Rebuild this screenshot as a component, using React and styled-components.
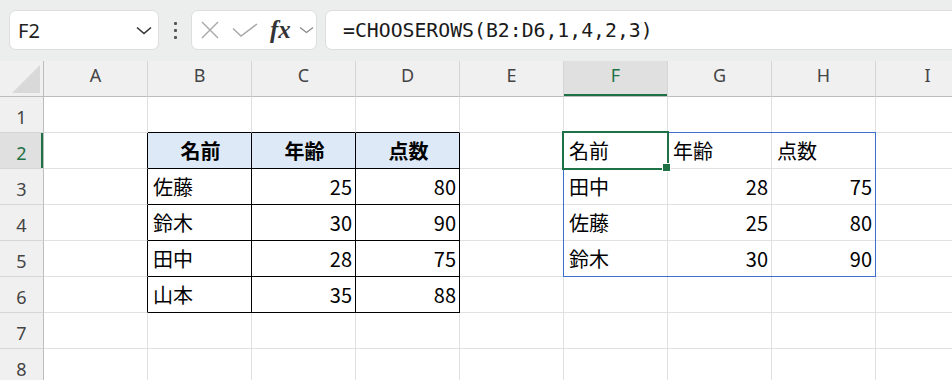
import React from 'react';
import styled, { createGlobalStyle } from 'styled-components';

const COLS = ['A', 'B', 'C', 'D', 'E', 'F', 'G', 'H', 'I'];
const ROWS = [1, 2, 3, 4, 5, 6, 7, 8];

// B2:D6
const source = [
    ['名前', '年齢', '点数'],
    ['佐藤', 25, 80],
    ['鈴木', 30, 90],
    ['田中', 28, 75],
    ['山本', 35, 88],
];

// =CHOOSEROWS(B2:D6,1,4,2,3) spilled from F2
const picked = [1, 4, 2, 3];
const spill = picked.map(i => source[i - 1]);

function cellAt(row, col) {
    if (row >= 2 && row <= 6 && col >= 1 && col <= 3) {
        return { value: source[row - 2][col - 1], head: row === 2 };
    }
    if (row >= 2 && row <= 5 && col >= 5 && col <= 7) {
        return { value: spill[row - 2][col - 5], head: false };
    }
    return null;
}

const inTable = (row, col) => row >= 2 && row <= 6 && col >= 1 && col <= 3;

function App() {
    return (
        <Page>
            <GlobalStyle />
            <Toolbar>
                <NameBox>
                    <NameText>F2</NameText>
                    <svg width="16" height="9" viewBox="0 0 16 9">
                        <path d="M1 1.5 L8 7.5 L15 1.5" fill="none" stroke="#333" strokeWidth="1.6" />
                    </svg>
                </NameBox>
                <Grip>
                    <Dot /><Dot /><Dot />
                </Grip>
                <FxBox>
                    <svg width="20" height="20" viewBox="0 0 20 20">
                        <path d="M2 2 L18 18 M18 2 L2 18" stroke="#a8a8a8" strokeWidth="1.4" />
                    </svg>
                    <svg width="26" height="14" viewBox="0 0 26 14">
                        <path d="M1 5.5 L9 13 L25 1" fill="none" stroke="#a8a8a8" strokeWidth="1.4" />
                    </svg>
                    <FxGlyph>fx</FxGlyph>
                    <svg width="15" height="8" viewBox="0 0 15 8">
                        <path d="M1 1.5 L7.5 6.5 L14 1.5" fill="none" stroke="#8a8a8a" strokeWidth="1.3" />
                    </svg>
                </FxBox>
                <FormulaBox>=CHOOSEROWS(B2:D6,1,4,2,3)</FormulaBox>
            </Toolbar>

            <Sheet>
                <Corner>
                    <svg width="28" height="28" viewBox="0 0 28 28">
                        <path d="M28 0 L28 28 L0 28 Z" fill="#d9d9d9" />
                    </svg>
                </Corner>
                {COLS.map(c => (
                    <ColHead key={c} $active={c === 'F'}>{c}</ColHead>
                ))}
                {ROWS.map(r => (
                    <React.Fragment key={r}>
                        <RowHead $active={r === 2}>{r}</RowHead>
                        {COLS.map((c, ci) => {
                            const cell = cellAt(r, ci);
                            const isNum = cell && typeof cell.value === 'number';
                            const tableHead = cell && cell.head && inTable(r, ci);
                            return (
                                <Cell
                                    key={c}
                                    $edgeRight={r >= 2 && r <= 6 && ci <= 3}
                                    $edgeBottom={r >= 1 && r <= 6 && ci >= 1 && ci <= 3}
                                    $fill={tableHead}
                                    $bold={tableHead}
                                    $align={tableHead ? 'center' : isNum ? 'right' : 'left'}
                                >
                                    {cell ? cell.value : ''}
                                </Cell>
                            );
                        })}
                    </React.Fragment>
                ))}
                <SpillFrame />
                <ActiveCell />
                <FillHandle />
            </Sheet>
        </Page>
    );
}

const GlobalStyle = createGlobalStyle`
    html, body {
        margin: 0;
        background: #fff;
        overflow: hidden;
    }
`;

const Page = styled.div`
    width: 952px;
    height: 380px;
    overflow: hidden;
    font-family: "Noto Sans", "Noto Sans CJK JP", sans-serif;
`;

const Toolbar = styled.div`
    height: 61px;
    box-sizing: border-box;
    padding: 10px 0 11px 9px;
    background: #eceeee;
    display: flex;
    align-items: stretch;
`;

const BoxBase = styled.div`
    background: #fff;
    border: 1px solid #dedede;
    border-radius: 7px;
    box-sizing: border-box;
    display: flex;
    align-items: center;
`;

const NameBox = styled(BoxBase)`
    width: 150px;
    padding: 0 6px 0 8px;
    justify-content: space-between;
`;

const NameText = styled.span`
    font-size: 20px;
    color: #222;
`;

const Grip = styled.div`
    width: 32px;
    display: flex;
    flex-direction: column;
    align-items: center;
    justify-content: center;
    gap: 4px;
`;

const Dot = styled.span`
    width: 3px;
    height: 3px;
    background: #555;
    border-radius: 1px;
`;

const FxBox = styled(BoxBase)`
    width: 126px;
    padding: 0 0 0 8px;
    gap: 12px;
    svg:last-child {
        margin-left: -4px;
    }
`;

const FxGlyph = styled.span`
    font-family: "Liberation Serif", serif;
    font-style: italic;
    font-weight: 700;
    font-size: 25px;
    color: #333;
    line-height: 1;
    margin-top: -2px;
`;

const FormulaBox = styled(BoxBase)`
    flex: 1;
    margin-left: 8px;
    margin-right: -20px;
    padding-left: 17px;
    font-family: "DejaVu Sans Mono", "Liberation Mono", monospace;
    font-size: 19.8px;
    color: #1a1a1a;
`;

const Sheet = styled.div`
    position: relative;
    display: grid;
    grid-template-columns: 44px repeat(9, 104px);
    grid-auto-rows: 36px;
`;

const HeadBase = styled.div`
    background: #f0f0f0;
    color: #444;
    font-size: 18px;
    display: flex;
    align-items: center;
    justify-content: center;
    box-sizing: border-box;
`;

const Corner = styled(HeadBase)`
    border-right: 1px solid #bdbdbd;
    border-bottom: 1px solid #bdbdbd;
    align-items: flex-end;
    justify-content: flex-end;
    padding: 0 3px 3px 0;
`;

const ColHead = styled(HeadBase)`
    border-right: 1px solid #d6d6d6;
    border-bottom: 1px solid #bdbdbd;
    padding-bottom: 7px;
    background: ${p => p.$active ? '#e0e0e0' : '#f0f0f0'};
    color: ${p => p.$active ? '#1e7145' : '#444'};
    box-shadow: ${p => p.$active ? 'inset 0 -2px 0 #1e7145' : 'none'};
`;

const RowHead = styled(HeadBase)`
    border-right: 1px solid #bdbdbd;
    border-bottom: 1px solid #d6d6d6;
    padding-top: 4px;
    background: ${p => p.$active ? '#e0e0e0' : '#f0f0f0'};
    color: ${p => p.$active ? '#1e7145' : '#444'};
    box-shadow: ${p => p.$active ? 'inset -2px 0 0 #1e7145' : 'none'};
`;

const Cell = styled.div`
    box-sizing: border-box;
    border-right: 1px solid ${p => p.$edgeRight ? '#000' : '#e1e1e1'};
    border-bottom: 1px solid ${p => p.$edgeBottom ? '#000' : '#e1e1e1'};
    background: ${p => p.$fill ? '#dde9f7' : '#fff'};
    display: flex;
    align-items: center;
    justify-content: ${p => p.$align === 'right' ? 'flex-end' : p.$align === 'center' ? 'center' : 'flex-start'};
    padding: 0 3px 0 5px;
    font-family: "Noto Sans CJK JP", sans-serif;
    font-size: 20px;
    font-weight: ${p => p.$bold ? 700 : 400};
    color: #000;
    white-space: nowrap;
    overflow: hidden;
`;

const SpillFrame = styled.div`
    position: absolute;
    left: 563px;
    top: 71px;
    width: 313px;
    height: 145px;
    box-sizing: border-box;
    border: 1px solid #3d6fc9;
    pointer-events: none;
`;

const ActiveCell = styled.div`
    position: absolute;
    left: 562px;
    top: 70px;
    width: 107px;
    height: 39px;
    box-sizing: border-box;
    border: 2px solid #1e7145;
    pointer-events: none;
`;

const FillHandle = styled.div`
    position: absolute;
    left: 663px;
    top: 103px;
    width: 7px;
    height: 7px;
    background: #1e7145;
    outline: 1px solid #fff;
`;

export default App;
